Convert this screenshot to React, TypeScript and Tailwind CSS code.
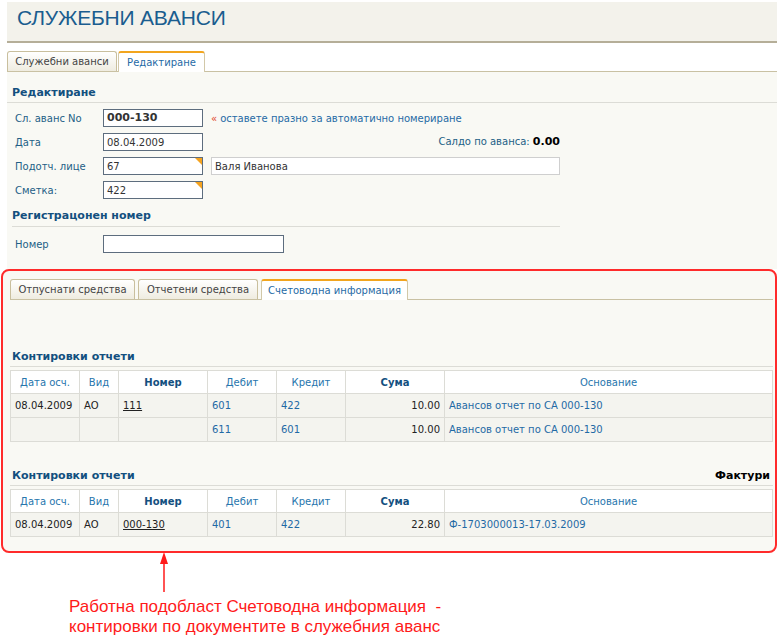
import React from 'react';

const ui = "font-['DejaVu_Sans',sans-serif]";

function Field({ value, bold, corner, width = 'w-[100px]' }: { value: string; bold?: boolean; corner?: boolean; width?: string }) {
  return (
    <div className={`relative h-[18px] ${width} border border-[#5d6d7e] bg-white pl-[3px] flex items-center text-[10px] text-[#333] ${bold ? 'font-bold text-[11px]' : ''}`}>
      {value}
      {corner && (
        <span className="absolute top-0 right-0 w-0 h-0 border-l-[7px] border-l-transparent border-t-[7px] border-t-[#f5a31f]" />
      )}
    </div>
  );
}

function FormRow({ label, children }: { label: string; children?: React.ReactNode }) {
  return (
    <div className="flex items-center h-6">
      <div className="w-[88px] text-[10px] text-[#235f86]">{label}</div>
      {children}
    </div>
  );
}

type Row = { date: string; kind: string; num: string; debit: string; credit: string; sum: string; basis: string };

function Postings({ rows }: { rows: Row[] }) {
  const th = 'border border-[#dcdcd6] font-normal text-[#2776ad] text-center align-middle';
  const td = 'border border-[#dcdcd6] px-[4px]';
  return (
    <table className="table-fixed border-collapse w-[763px] text-[10px]">
      <colgroup>
        <col className="w-[69px]" />
        <col className="w-[39px]" />
        <col className="w-[89px]" />
        <col className="w-[69px]" />
        <col className="w-[69px]" />
        <col className="w-[99px]" />
        <col />
      </colgroup>
      <thead>
        <tr className="h-[23px] bg-white">
          <th className={th}>Дата осч.</th>
          <th className={th}>Вид</th>
          <th className={`${th} !font-bold text-[#13507f]`}>Номер</th>
          <th className={th}>Дебит</th>
          <th className={th}>Кредит</th>
          <th className={`${th} !font-bold text-[#13507f]`}>Сума</th>
          <th className={th}>Основание</th>
        </tr>
      </thead>
      <tbody>
        {rows.map((r, i) => (
          <tr key={i} className="h-[24px] bg-[#f4f4ef]">
            <td className={`${td} text-[#222]`}>{r.date}</td>
            <td className={`${td} text-[#222]`}>{r.kind}</td>
            <td className={`${td} text-[#222]`}>
              <span className="underline">{r.num}</span>
            </td>
            <td className={`${td} text-[#1f6aa5]`}>{r.debit}</td>
            <td className={`${td} text-[#1f6aa5]`}>{r.credit}</td>
            <td className={`${td} text-right text-[#222]`}>{r.sum}</td>
            <td className={`${td} text-[#1f6aa5]`}>{r.basis}</td>
          </tr>
        ))}
      </tbody>
    </table>
  );
}

function Tab({ label, active, width }: { label: string; active?: boolean; width: string }) {
  return (
    <div
      className={`${width} h-[20px] flex items-center justify-center text-[10px] border border-b-0 rounded-t-[3px] ${
        active
          ? 'bg-white border-[#d2c8a8] border-t-2 border-t-[#f2a51e] text-[#1f6aa5] h-[21px] -mb-px'
          : 'bg-gradient-to-b from-white to-[#efece0] border-[#c9bf9d] text-[#444]'
      }`}
    >
      {label}
    </div>
  );
}

export default function App() {
  return (
    <div className={`${ui} bg-white w-[777px] h-[636px] overflow-hidden`}>
      {/* Заглавие */}
      <div className="ml-[7px] mt-[2px] h-[41px] bg-[#f3f2eb] border-b-2 border-[#b5ae98] pl-[10px] pt-[4px]">
        <h1 className="font-['Liberation_Sans',Arial,sans-serif] text-[21px] leading-[24px] text-[#1a5d8f] tracking-[-0.2px]">
          СЛУЖЕБНИ АВАНСИ
        </h1>
      </div>

      {/* Табове */}
      <div className="ml-[7px] mt-[7px] flex items-end gap-px border-b border-[#c9c1a3] h-[22px]">
        <Tab label="Служебни аванси" width="w-[110px]" />
        <Tab label="Редактиране" width="w-[87px]" active />
      </div>

      {/* Редактиране */}
      <div className="ml-[7px] bg-[#f9f9f4] pb-[13px]">
        <div className="pt-[13px] pb-[2px] pl-[5px] border-b border-[#dcdcd6] text-[11px] font-bold text-[#13507f] leading-[15px]">
          Редактиране
        </div>
        <div className="pl-[8px] pt-[3px] w-[553px]">
          <FormRow label="Сл. аванс No">
            <Field value="000-130" bold />
            <span className="ml-[8px] text-[10px] text-[#e0452a]">«</span>
            <span className="ml-[3px] text-[10px] text-[#1f6aa5]">оставете празно за автоматично номериране</span>
          </FormRow>
          <FormRow label="Дата">
            <Field value="08.04.2009" />
            <div className="flex-1 text-right text-[10px] text-[#235f86]">
              Салдо по аванса: <span className="font-bold text-[11px] text-black">0.00</span>
            </div>
          </FormRow>
          <FormRow label="Подотч. лице">
            <Field value="67" corner />
            <div className="ml-[8px] h-[18px] flex-1 border border-[#cfcfcf] bg-white pl-[3px] flex items-center text-[10px] text-[#333]">
              Валя Иванова
            </div>
          </FormRow>
          <FormRow label="Сметка:">
            <Field value="422" corner />
          </FormRow>
        </div>
        <div className="ml-[5px] w-[548px] mt-[7px] pb-[3px] border-b border-[#dcdcd6] text-[11px] font-bold text-[#13507f] leading-[14px]">
          Регистрацонен номер
        </div>
        <div className="pl-[8px] mt-[5px]">
          <FormRow label="Номер">
            <Field value="" width="w-[181px]" />
          </FormRow>
        </div>
      </div>

      {/* Работна подобласт */}
      <div className="ml-px w-[776px] h-[284px] border-2 border-[#ff2b2b] rounded-[8px] bg-[#f9f9f4] pl-[7px] pr-[2px] pt-[8px]">
        <div className="flex items-end gap-[3px] border-b border-[#c9c1a3] h-[21px]">
          <Tab label="Отпуснати средства" width="w-[125px]" />
          <Tab label="Отчетени средства" width="w-[120px]" />
          <Tab label="Счетоводна информация" width="w-[147px]" active />
        </div>

        <div className="mt-[50px] w-[763px] pl-[2px] pb-[2px] border-b border-[#dcdcd6] text-[11px] font-bold text-[#13507f] leading-[14px]">
          Контировки отчети
        </div>
        <div className="mt-[3px]">
          <Postings
            rows={[
              { date: '08.04.2009', kind: 'АО', num: '111', debit: '601', credit: '422', sum: '10.00', basis: 'Авансов отчет по СА 000-130' },
              { date: '', kind: '', num: '', debit: '611', credit: '601', sum: '10.00', basis: 'Авансов отчет по СА 000-130' },
            ]}
          />
        </div>

        <div className="mt-[27px] w-[763px] pl-[2px] pr-[3px] pb-[2px] border-b border-[#dcdcd6] flex justify-between text-[11px] font-bold leading-[14px]">
          <span className="text-[#13507f]">Контировки отчети</span>
          <span className="text-black">Фактури</span>
        </div>
        <div className="mt-[3px]">
          <Postings
            rows={[
              { date: '08.04.2009', kind: 'АО', num: '000-130', debit: '401', credit: '422', sum: '22.80', basis: 'Ф-1703000013-17.03.2009' },
            ]}
          />
        </div>
      </div>

      {/* Бележка */}
      <div className="ml-[159px] -mt-px w-[10px]">
        <svg width="10" height="40" viewBox="0 0 10 40" className="block">
          <polygon points="5,0 9,12 1,12" fill="#ff1a1a" />
          <line x1="5" y1="10" x2="5" y2="40" stroke="#ff1a1a" strokeWidth="1.5" />
        </svg>
      </div>
      <div className="ml-[69px] mt-[5px] font-['Liberation_Sans',Arial,sans-serif] text-[17px] leading-[20px] text-[#ff1a1a] whitespace-pre">
        {'Работна подобласт Счетоводна информация  -\nконтировки по документите в служебния аванс'}
      </div>
    </div>
  );
}
